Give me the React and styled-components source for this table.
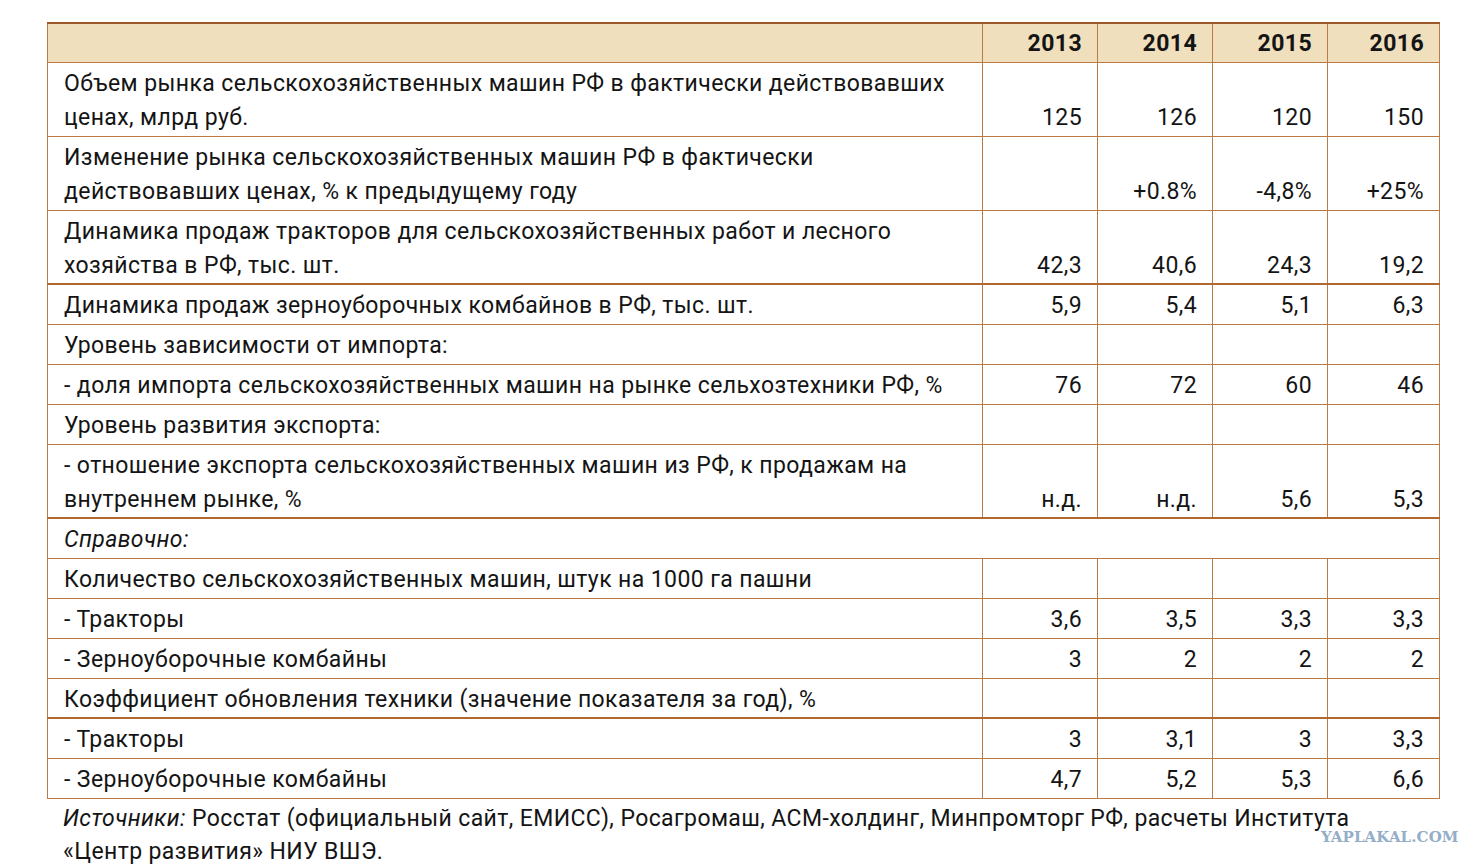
import React from "react";
import styled, { createGlobalStyle } from "styled-components";

const GlobalStyle = createGlobalStyle`
  html, body {
    margin: 0;
    padding: 0;
    background: #ffffff;
  }
  body {
    font-family: Roboto, "Noto Sans", sans-serif;
    color: #141414;
  }
`;

const Page = styled.div`
  position: relative;
  width: 1483px;
  height: 868px;
  overflow: hidden;
  padding: 22px 0 0 47px;
  box-sizing: border-box;
`;

const Table = styled.table`
  width: 1392px;
  border-collapse: collapse;
  table-layout: fixed;
  font-size: 23px;
  line-height: 34px;
  letter-spacing: 0.4px;
`;

const HeadCell = styled.th`
  background: #efdfbd;
  border: 1px solid #b97a45;
  border-top: 2px solid #9c5a2c;
  padding: 3px 15px 1px 16px;
  text-align: right;
  font-weight: 700;
`;

const Cell = styled.td`
  border: 1px solid #b97a45;
  border-bottom: ${(p) => (p.$heavy ? "2px solid #b0682f" : "1px solid #b97a45")};
  padding: 4px 15px ${(p) => (p.$heavy ? "0" : "1px")} 16px;
  white-space: nowrap;
  vertical-align: ${(p) => (p.$num ? "bottom" : "top")};
  text-align: ${(p) => (p.$num ? "right" : "left")};
  font-style: ${(p) => (p.$italic ? "italic" : "normal")};
`;

const Line = styled.div``;

const Notes = styled.div`
  padding: 3px 0 0 16px;
  font-size: 23px;
  line-height: 33px;
  letter-spacing: 0.4px;
`;

const Em = styled.span`
  font-style: italic;
`;

const Watermark = styled.div`
  position: absolute;
  left: 1321px;
  top: 828px;
  font-family: "DejaVu Serif", serif;
  font-weight: 700;
  font-size: 15px;
  letter-spacing: 0.1px;
  color: #93aec6;
`;

const years = ["2013", "2014", "2015", "2016"];

const rows = [
  {
    label: ["Объем рынка сельскохозяйственных машин РФ в фактически действовавших", "ценах, млрд руб."],
    values: ["125", "126", "120", "150"],
  },
  {
    label: ["Изменение рынка сельскохозяйственных машин РФ в фактически", "действовавших ценах, % к предыдущему году"],
    values: ["", "+0.8%", "-4,8%", "+25%"],
  },
  {
    label: ["Динамика продаж тракторов для сельскохозяйственных работ и лесного", "хозяйства в РФ, тыс. шт."],
    values: ["42,3", "40,6", "24,3", "19,2"],
    heavy: true,
  },
  { label: ["Динамика продаж зерноуборочных комбайнов в РФ, тыс. шт."], values: ["5,9", "5,4", "5,1", "6,3"] },
  { label: ["Уровень зависимости от импорта:"], values: ["", "", "", ""] },
  {
    label: ["- доля импорта сельскохозяйственных машин на рынке сельхозтехники РФ, %"],
    values: ["76", "72", "60", "46"],
  },
  { label: ["Уровень развития экспорта:"], values: ["", "", "", ""] },
  {
    label: ["- отношение экспорта сельскохозяйственных машин из РФ, к продажам на", "внутреннем рынке, %"],
    values: ["н.д.", "н.д.", "5,6", "5,3"],
    heavy: true,
  },
  { label: ["Справочно:"], span: true },
  { label: ["Количество сельскохозяйственных машин, штук на 1000 га пашни"], values: ["", "", "", ""] },
  { label: ["- Тракторы"], values: ["3,6", "3,5", "3,3", "3,3"] },
  { label: ["- Зерноуборочные комбайны"], values: ["3", "2", "2", "2"] },
  {
    label: ["Коэффициент обновления техники (значение показателя за год), %"],
    values: ["", "", "", ""],
    heavy: true,
  },
  { label: ["- Тракторы"], values: ["3", "3,1", "3", "3,3"] },
  { label: ["- Зерноуборочные комбайны"], values: ["4,7", "5,2", "5,3", "6,6"] },
];

export default function App() {
  return (
    <>
      <GlobalStyle />
      <Page>
        <Table>
          <colgroup>
            <col style={{ width: 935 }} />
            <col style={{ width: 115 }} />
            <col style={{ width: 115 }} />
            <col style={{ width: 115 }} />
            <col style={{ width: 112 }} />
          </colgroup>
          <thead>
            <tr>
              <HeadCell />
              {years.map((y) => (
                <HeadCell key={y}>{y}</HeadCell>
              ))}
            </tr>
          </thead>
          <tbody>
            {rows.map((r, i) =>
              r.span ? (
                <tr key={i}>
                  <Cell colSpan={5} $italic>
                    {r.label[0]}
                  </Cell>
                </tr>
              ) : (
                <tr key={i}>
                  <Cell $heavy={r.heavy}>
                    {r.label.map((l) => (
                      <Line key={l}>{l}</Line>
                    ))}
                  </Cell>
                  {r.values.map((v, j) => (
                    <Cell key={j} $num $heavy={r.heavy}>
                      {v}
                    </Cell>
                  ))}
                </tr>
              )
            )}
          </tbody>
        </Table>
        <Notes>
          <Em>Источники:</Em> Росстат (официальный сайт, ЕМИСС), Росагромаш, АСМ-холдинг, Минпромторг РФ, расчеты Института
          <br />
          «Центр развития» НИУ ВШЭ.
        </Notes>
        <Watermark>YAPLAKAL.COM</Watermark>
      </Page>
    </>
  );
}
